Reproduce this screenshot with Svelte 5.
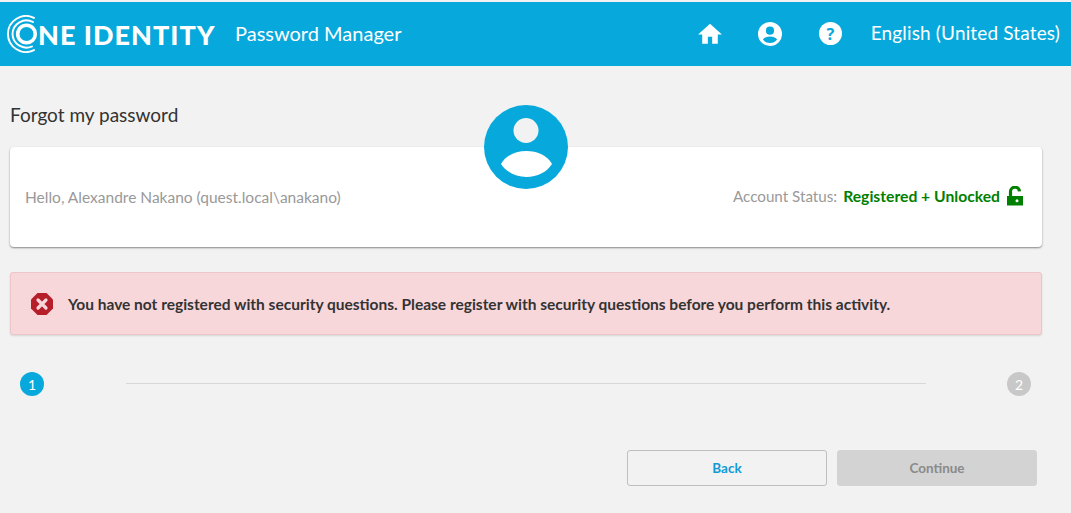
<script>
  const title = 'Forgot my password';
  const user = 'Alexandre Nakano (quest.local\\anakano)';
  const message = 'You have not registered with security questions. Please register with security questions before you perform this activity.';
</script>

<div class="page">
  <header class="topbar">
    <div class="brand">
      <svg class="logo-rings" viewBox="0 0 38 38" width="38" height="38" fill="none" stroke="#fff" stroke-linecap="round">
        <path d="M27 2.900A18 18 0 1 0 27 35.100" stroke-width="1.900" />
        <path d="M26 7A14 14 0 0 0 5.500 19A14 14 0 0 0 25 31.500" stroke-width="1.900" />
        <circle cx="19.500" cy="19" r="8.800" stroke-width="3.600" />
      </svg>
      <span class="logo-text"><span class="logo-n">NE</span> IDENTITY</span>
      <span class="product">Password Manager</span>
    </div>
    <nav class="nav">
      <svg class="nav-icon home" viewBox="0 0 24 24" width="26" height="26" fill="#fff"><path d="M10 21v-6.500h4V21h5.200v-8.500H23L12 2.600 1 12.500h3.800V21z" /></svg>
      <svg class="nav-icon" viewBox="0 0 24 24" width="24" height="24" fill="#fff"><path fill-rule="evenodd" d="M12 0a12 12 0 1 0 0 24 12 12 0 0 0 0-24zm0 4.600a4.100 4.100 0 1 1 0 8.200 4.100 4.100 0 0 1 0-8.200zM12 21c-2.900 0-5.500-1.400-7.100-3.600C6.600 15.500 9.100 14.600 12 14.600s5.400.9 7.100 2.800C17.500 19.600 14.900 21 12 21z" /></svg>
      <svg class="nav-icon help" viewBox="0 0 24 24" width="23" height="23"><circle cx="12" cy="12" r="12" fill="#fff" /><text x="12" y="18.500" text-anchor="middle" class="q">?</text></svg>
      <span class="lang">English (United States)</span>
    </nav>
  </header>

  <main class="content">
    <h1>{title}</h1>
    <section class="card">
      <span class="hello">Hello, {user}</span>
      <div class="status">
        <span class="status-label">Account Status:</span>
        <strong>Registered + Unlocked</strong>
        <svg viewBox="0 0 16 20" width="16" height="20" fill="#008000">
          <path d="M3.500 10V6a4.500 4.500 0 0 1 9-.6" fill="none" stroke="#008000" stroke-width="3.200" />
          <path fill-rule="evenodd" d="M0 10h16v9.500H0zm10 3.200a1.500 1.500 0 1 0 0 3 1.500 1.500 0 0 0 0-3z" />
        </svg>
      </div>
      <svg class="avatar" viewBox="0 0 84 84" width="84" height="84">
        <circle cx="42" cy="42" r="42" fill="#07a9dc" />
        <circle cx="42" cy="25.500" r="12.500" fill="#f2f2f2" />
        <path d="M17 59C22 50 32 46 42.500 46S63 50 68 59C63 67 53 72 42.500 72S22 67 17 59z" fill="#fff" />
      </svg>
    </section>

    <div class="alert">
      <svg viewBox="0 0 22 22" width="22" height="22">
        <path d="M6.500 0h9L22 6.500v9L15.500 22h-9L0 15.500v-9z" fill="#b61f29" />
        <path d="M7 7l8 8M15 7l-8 8" stroke="#f8d7da" stroke-width="3.200" stroke-linecap="round" />
      </svg>
      <span>{message}</span>
    </div>

    <div class="stepper">
      <span class="step active">1</span>
      <span class="line"></span>
      <span class="step">2</span>
    </div>

    <div class="actions">
      <button class="btn back">Back</button>
      <button class="btn next" disabled>Continue</button>
    </div>
  </main>
</div>

<style>
  :global(body) {
    background: #f2f2f2;
    font-family: Lato, "Noto Sans", sans-serif;
  }
  .page {
    padding-top: 2px;
    height: 511px;
    overflow: hidden;
  }
  .topbar {
    height: 64px;
    background: #07a9dc;
    color: #fff;
    display: flex;
    align-items: center;
    justify-content: space-between;
    padding: 0 11px 0 7px;
  }
  .brand {
    display: flex;
    align-items: center;
  }
  .logo-rings {
    flex: none;
  }
  .logo-text {
    font-weight: 900;
    font-size: 27px;
    letter-spacing: 1px;
    margin-left: -7px;
    width: 176px;
    white-space: nowrap;
  }
  .product {
    font-size: 20px;
    margin-left: 21px;
    margin-top: -2px;
  }
  .nav {
    display: flex;
    align-items: center;
  }
  .nav-icon {
    flex: none;
  }
  .home {
    margin-right: 35px;
    margin-top: -1px;
  }
  .help {
    margin-left: 37px;
    margin-top: -1px;
  }
  .q {
    font: 700 17px "Open Sans", sans-serif;
    fill: #07a9dc;
  }
  .lang {
    font-size: 19px;
    letter-spacing: 0.15px;
    margin-left: 28.5px;
    margin-top: -3px;
  }
  .content {
    padding: 0 29px 0 10px;
  }
  h1 {
    margin: 36px 0 19px;
    font-weight: 400;
    font-size: 19px;
    line-height: 26px;
    color: #333;
  }
  .card {
    position: relative;
    height: 100px;
    background: #fff;
    border-radius: 4px;
    box-shadow: 0 1px 2px rgba(0, 0, 0, 0.45);
    display: flex;
    align-items: center;
    justify-content: space-between;
    padding: 0 19px 0 15px;
    font-size: 15.5px;
    color: #999;
  }
  .hello {
    margin-top: -1px;
  }
  .status {
    display: flex;
    align-items: center;
    gap: 6px;
    margin-top: -3px;
  }
  .status-label {
    font-size: 15.2px;
  }
  .status strong {
    color: #008000;
    font-weight: 700;
    font-size: 15.7px;
    margin-right: 1px;
  }
  .avatar {
    position: absolute;
    left: 474px;
    top: -42px;
  }
  .alert {
    margin-top: 25px;
    height: 61px;
    background: #f8d7da;
    border: 1px solid #eec6c9;
    border-radius: 3px;
    box-shadow: 0 1px 2px rgba(0, 0, 0, 0.12);
    display: flex;
    align-items: center;
    gap: 15px;
    padding-left: 20px;
    font-size: 15.5px;
    font-weight: 700;
    color: #333;
  }
  .stepper {
    display: flex;
    align-items: center;
    margin-top: 37px;
    padding: 0 11px 0 10px;
  }
  .step {
    width: 24px;
    height: 24px;
    border-radius: 50%;
    background: #c8c8c8;
    color: #fff;
    font-size: 14px;
    display: flex;
    align-items: center;
    justify-content: center;
  }
  .step.active {
    background: #07a9dc;
  }
  .line {
    flex: 1;
    height: 1px;
    background: #d8d8d8;
    margin: 0 81px 1px 82px;
  }
  .actions {
    display: flex;
    justify-content: flex-end;
    gap: 10px;
    margin-top: 54px;
    margin-right: 5px;
  }
  .btn {
    width: 200px;
    height: 36px;
    border-radius: 3px;
    font: 700 13.5px Lato, sans-serif;
    background: transparent;
    border: 1px solid #bfbfbf;
  }
  .back {
    color: #0f9bd7;
  }
  .next {
    background: #d3d3d3;
    border-color: #d3d3d3;
    color: #8a8a8a;
  }
</style>
